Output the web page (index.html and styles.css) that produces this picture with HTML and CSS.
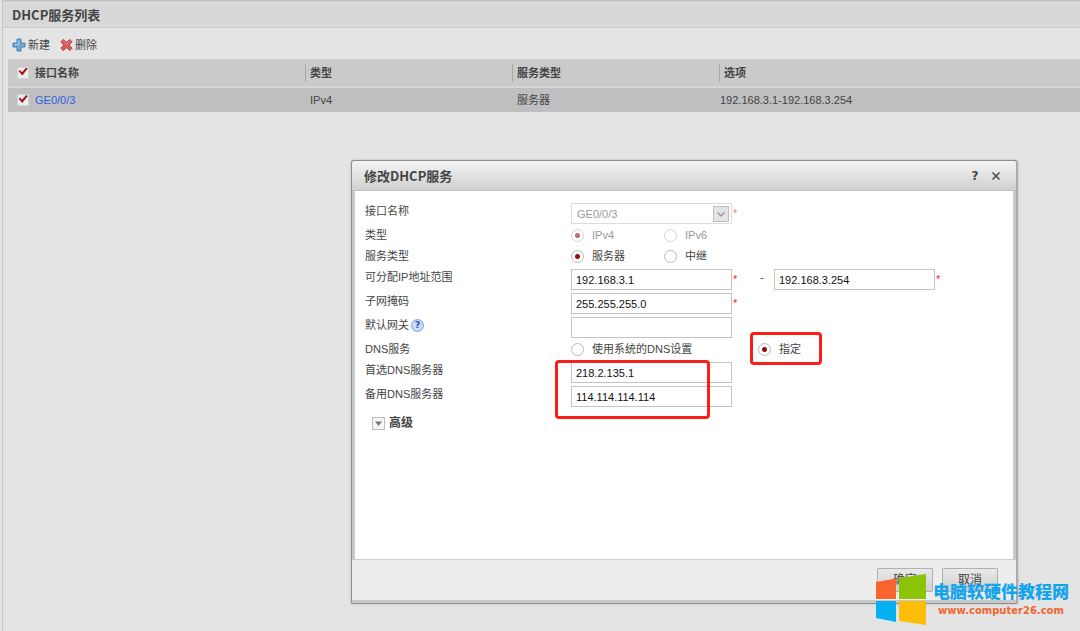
FILE: index.html
```html
<!DOCTYPE html>
<html lang="zh-CN">
<head>
<meta charset="utf-8">
<title>DHCP服务列表</title>
<link rel="stylesheet" href="styles.css">
</head>
<body>
<main class="panel">
  <h1 class="panel-title">DHCP服务列表</h1>
  <div class="toolbar">
    <button class="tool" type="button">
      <svg width="14" height="14" viewBox="0 0 14 14"><path d="M5 1h4v4h4v4H9v4H5V9H1V5h4z" fill="#75a9d6" stroke="#477eae" stroke-linejoin="round"/><path d="M6.5 2.5v4h-4" fill="none" stroke="#a9cdec"/></svg>
      新建
    </button>
    <button class="tool" type="button">
      <svg width="13" height="14" viewBox="0 0 14 14"><path d="M3.500 1 7 4.200 10.500 1 13 3.500 9.800 7l3.200 3.500-2.500 2.500L7 9.800 3.500 13 1 10.500 4.200 7 1 3.500z" fill="#dc5a5c" stroke="#b43b40" stroke-linejoin="round"/><path d="M3.500 2.800 7 6l3.500-3.200" fill="none" stroke="#ee8d8c"/></svg>
      删除
    </button>
  </div>
  <table class="list">
    <thead>
      <tr>
        <th><div class="cell first"><input class="check" type="checkbox" checked aria-label="全选">接口名称</div></th>
        <th><div class="cell">类型</div></th>
        <th><div class="cell">服务类型</div></th>
        <th><div class="cell">选项</div></th>
      </tr>
    </thead>
    <tbody>
      <tr>
        <td><div class="cell first"><input class="check" type="checkbox" checked aria-label="选择 GE0/0/3"><a href="#">GE0/0/3</a></div></td>
        <td><div class="cell">IPv4</div></td>
        <td><div class="cell">服务器</div></td>
        <td><div class="cell last">192.168.3.1-192.168.3.254</div></td>
      </tr>
    </tbody>
  </table>
</main>

<section class="dialog" role="dialog" aria-labelledby="dialog-title">
  <header class="dialog-head">
    <h2 id="dialog-title">修改DHCP服务</h2>
    <button class="head-btn help" type="button" aria-label="帮助">?</button>
    <button class="head-btn" type="button" aria-label="关闭"><svg width="10" height="10" viewBox="0 0 10 10"><path d="m1.500 1.500 7 7m0-7-7 7" stroke="#505050" stroke-width="1.600"/></svg></button>
  </header>
  <form class="dialog-body">
    <div class="row">
      <label for="iface">接口名称</label>
      <div class="control">
        <span class="select"><select id="iface" disabled><option>GE0/0/3</option></select><svg class="arrow" width="16" height="16" viewBox="0 0 16 16"><rect x=".5" y=".5" width="15" height="15" fill="#e4e4e4" stroke="#c0c0c0"/><path d="m4.500 6.500 3.500 3.500 3.500-3.500" fill="none" stroke="#999" stroke-width="1.500"/></svg></span>
        <span class="star faded">*</span>
      </div>
    </div>
    <div class="row radios disabled">
      <span class="caption">类型</span>
      <div class="control">
        <label class="option"><input type="radio" name="type" checked disabled>IPv4</label>
        <label class="option"><input type="radio" name="type" disabled>IPv6</label>
      </div>
    </div>
    <div class="row radios">
      <span class="caption">服务类型</span>
      <div class="control">
        <label class="option"><input type="radio" name="service" checked>服务器</label>
        <label class="option"><input type="radio" name="service">中继</label>
      </div>
    </div>
    <div class="row">
      <label for="start">可分配IP地址范围</label>
      <div class="control">
        <input class="text" id="start" type="text" value="192.168.3.1"><span class="star">*</span>
        <span class="dash">-</span>
        <input class="text" type="text" value="192.168.3.254" aria-label="结束IP地址"><span class="star">*</span>
      </div>
    </div>
    <div class="row">
      <label for="mask">子网掩码</label>
      <div class="control"><input class="text" id="mask" type="text" value="255.255.255.0"><span class="star">*</span></div>
    </div>
    <div class="row">
      <label for="gateway">默认网关<span class="hint">?</span></label>
      <div class="control"><input class="text" id="gateway" type="text"></div>
    </div>
    <div class="row radios wide">
      <span class="caption">DNS服务</span>
      <div class="control">
        <label class="option"><input type="radio" name="dns">使用系统的DNS设置</label>
        <label class="option"><input type="radio" name="dns" checked>指定</label>
      </div>
    </div>
    <div class="row">
      <label for="dns1">首选DNS服务器</label>
      <div class="control"><input class="text" id="dns1" type="text" value="218.2.135.1"></div>
    </div>
    <div class="row">
      <label for="dns2">备用DNS服务器</label>
      <div class="control"><input class="text" id="dns2" type="text" value="114.114.114.114"></div>
    </div>
    <button class="advanced" type="button">
      <svg width="13" height="13" viewBox="0 0 13 13"><rect x=".5" y=".5" width="12" height="12" fill="#f6f6f6" stroke="#bcbcbc"/><path d="M3 4.500h7l-3.500 4.500z" fill="#777"/></svg>
      高级
    </button>
    <div class="mark mark-dns"></div>
    <div class="mark mark-option"></div>
  </form>
  <footer class="dialog-foot">
    <button class="btn" type="button">确定</button>
    <button class="btn" type="button">取消</button>
  </footer>
</section>

<aside class="watermark">
  <svg width="52" height="52" viewBox="0 0 52 52"><path d="M0 8 20 4.500v20.500H0z" fill="#f8632e"/><path d="M23 4 50 0v25H23z" fill="#8cc208"/><path d="M0 27h20v21L0 44z" fill="#05b1f0"/><path d="M23 27h27v24l-27-4z" fill="#fdbd08"/></svg>
  <div class="brand">
    <strong>电脑软硬件教程网</strong>
    <span>www.computer26.com</span>
  </div>
</aside>
</body>
</html>
```

FILE: styles.css
```css
* {
  box-sizing: border-box;
}

body {
  margin: 0;
  padding: 0 0 0 2px;
  min-height: 100vh;
  display: flex;
  background: #e4e4e4;
  color: #444;
  font: 11px/18px "Liberation Sans", "Noto Sans CJK SC", sans-serif;
  overflow: hidden;
}

button,
input,
select {
  margin: 0;
  color: inherit;
  font: inherit;
}

.panel {
  flex: 1;
  border-left: 1px solid #c4c4c4;
  border-top: 2px solid #c6c6c6;
}

.panel-title {
  margin: 0;
  padding: 0 9px 1px;
  border-top: 1px solid #e4e4e4;
  border-bottom: 1px solid #cbcbcb;
  background: #d8d8d8;
  font: bold 13px/23px "Noto Sans CJK SC", sans-serif;
}

.toolbar {
  display: flex;
  gap: 10px;
  padding: 8px 9px 5px;
}

.tool {
  display: flex;
  align-items: center;
  gap: 2px;
  padding: 0;
  border: 0;
  background: none;
}

.list {
  width: calc(100% - 5px);
  margin-left: 5px;
  border-collapse: collapse;
  table-layout: fixed;
}

.list th,
.list td {
  padding: 0;
  text-align: left;
}

.list th:first-child {
  width: 297px;
}

.list th:nth-child(2),
.list th:nth-child(3) {
  width: 207px;
}

.list thead {
  background: #cacaca;
  border-bottom: 2px solid #d6d6d6;
}

.list th {
  height: 28px;
}

.list td {
  height: 25px;
}

.list tbody {
  background: #bfbfc1;
}

.list a {
  color: #2a64dc;
  text-decoration: none;
}

.cell {
  display: flex;
  align-items: center;
  gap: 6px;
  padding-left: 5px;
}

th .cell {
  border-left: 1px solid #a8a8a8;
  padding-left: 4px;
}

.cell.first {
  border-left: 0;
  padding-left: 9px;
}

.cell.last {
  padding-left: 1px;
}

.check {
  appearance: none;
  width: 12px;
  height: 12px;
  border: 1px solid #d2d2d2;
  background: #ededed;
}

.check:checked::before {
  content: "";
  display: block;
  width: 10px;
  height: 8px;
  background: #a51219;
  clip-path: polygon(5% 45%, 23% 35%, 40% 60%, 82% 0, 98% 12%, 43% 100%);
}

.dialog {
  position: absolute;
  top: 160px;
  left: 351px;
  right: 62px;
  border: 1px solid #8d8d8d;
  border-right: 2px solid #aaa;
  border-radius: 3px 3px 2px 2px;
  background: #c9c9c9;
  box-shadow: 0 0 3px #bbb;
}

.dialog-head {
  display: flex;
  align-items: center;
  height: 30px;
  padding: 0 14px 0 12px;
  border-bottom: 1px solid #bdbdbd;
  border-radius: 3px 3px 0 0;
  background: linear-gradient(#f4f4f4, #d0d0d0);
}

.dialog-head h2 {
  flex: 1;
  margin: 0;
  font: bold 13px/18px "Noto Sans CJK SC", sans-serif;
}

.head-btn {
  display: grid;
  place-items: center;
  width: 12px;
  height: 18px;
  margin-left: 9px;
  padding: 0;
  border: 0;
  background: none;
}

.help {
  font: bold 12px/18px "DejaVu Sans", sans-serif;
}

.dialog-body {
  position: relative;
  min-height: 369px;
  margin: 0 2px;
  padding: 11px 10px 20px;
  border: 1px solid #ccc;
  border-top: 0;
  background: #fff;
}

.row {
  display: grid;
  grid-template-columns: 206px 1fr;
  height: 24px;
}

.row.radios {
  height: 21px;
}

.row > label {
  display: flex;
}

.control {
  display: flex;
  align-items: flex-start;
}

.text,
.select select {
  width: 161px;
  height: 21px;
  padding: 1px 4px 0;
  border: 1px solid #c4c4c4;
  border-radius: 0;
  background: #fff;
  color: #111;
}

.text,
.select {
  margin-top: 1px;
}

.select {
  display: grid;
}

.select > * {
  grid-area: 1 / 1;
}

.select select {
  appearance: none;
  padding: 0 5px;
  border-color: #ddd;
  color: #999;
  opacity: 1;
}

.arrow {
  place-self: center end;
  margin-right: 3px;
}

.star {
  width: 8px;
  padding: 2px 0 0 1px;
  color: #f22;
}

.faded {
  opacity: 0.6;
}

.dash {
  width: 34px;
  padding-left: 20px;
}

.option {
  display: flex;
  align-items: center;
  gap: 8px;
  width: 93px;
}

.wide .option {
  width: 187px;
}

.option input {
  appearance: none;
  width: 13px;
  height: 13px;
  border: 1px solid #b9b9b9;
  border-radius: 50%;
  background: #fff;
}

.option input:checked {
  background: radial-gradient(circle, #990a10 0 2px, #fff 3px);
}

.disabled .option {
  color: #999;
}

.disabled input {
  opacity: 0.6;
}

.hint {
  width: 13px;
  height: 13px;
  margin: 3px 0 0 2px;
  border: 1px solid #86a0d6;
  border-radius: 50%;
  background: #c9dbf8;
  color: #2850a8;
  font: bold 9px/11px "DejaVu Sans", sans-serif;
  text-align: center;
}

.advanced {
  display: flex;
  align-items: center;
  gap: 4px;
  margin: 5px 0 0 7px;
  padding: 0;
  border: 0;
  background: none;
  font-size: 12px;
  font-weight: bold;
}

.mark {
  position: absolute;
  border: 3px solid #f91f18;
  border-radius: 4px;
  pointer-events: none;
}

.mark-dns {
  top: 169px;
  left: 200px;
  width: 155px;
  height: 59px;
}

.mark-option {
  top: 141px;
  left: 395px;
  width: 72px;
  height: 33px;
}

.dialog-foot {
  display: flex;
  justify-content: flex-end;
  gap: 9px;
  height: 43px;
  padding: 8px 18px 0;
  border-bottom: 3px solid #c8c8c8;
  background: #ededed;
}

.btn {
  width: 56px;
  height: 24px;
  padding: 0;
  border: 1px solid #b0b0b0;
  border-radius: 1px;
  background: linear-gradient(#e9e9e9, #cfcfcf);
  font-size: 12px;
}

.watermark {
  position: absolute;
  right: 9px;
  bottom: 5px;
  display: flex;
  gap: 3px;
}

.brand {
  display: flex;
  flex-direction: column;
  align-items: center;
  width: 140px;
  padding-top: 6px;
  white-space: nowrap;
}

.brand strong {
  color: #15a5ec;
  font: 900 17px/22px "Noto Sans CJK SC", sans-serif;
}

.brand span {
  color: #f26430;
  font: bold 10px/18px "DejaVu Sans", sans-serif;
}
```
